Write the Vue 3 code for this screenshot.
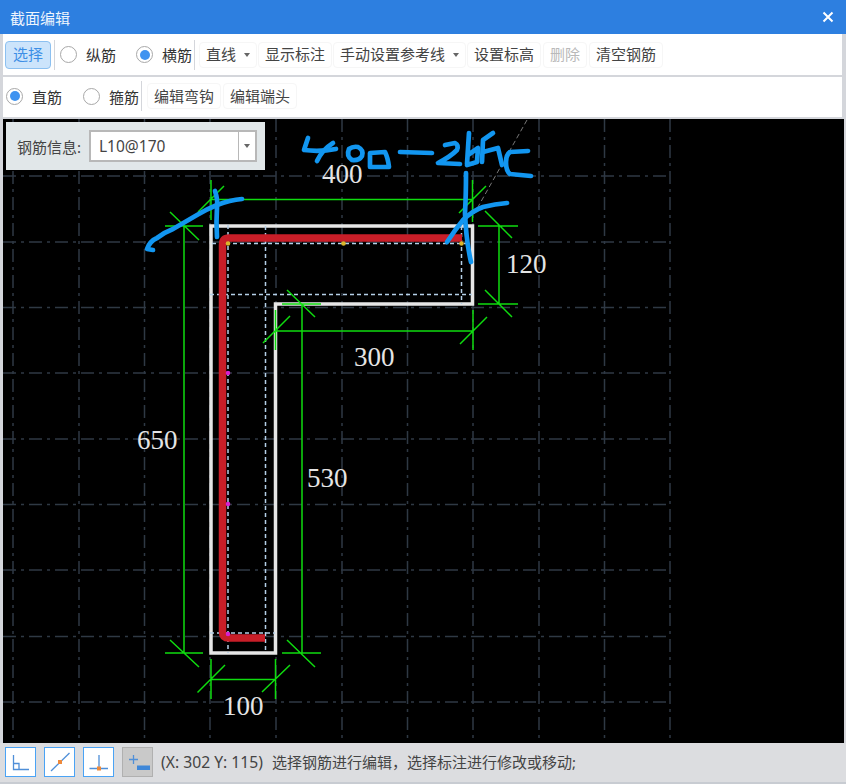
<template>
  <div class="window">
    <div class="title-bar">
      <span>截面编辑</span>
      <svg class="close" width="12" height="12" viewBox="0 0 12 12"><path d="M1.5 1.5 10.5 10.5M10.5 1.5 1.5 10.5" /></svg>
    </div>

    <div class="toolbar first">
      <button class="btn select">选择</button>
      <i class="sep"></i>
      <label class="radio" @click="barType = 'long'">
        <span class="dot" :class="{ on: barType === 'long' }"></span>纵筋
      </label>
      <label class="radio" @click="barType = 'cross'">
        <span class="dot" :class="{ on: barType === 'cross' }"></span>横筋
      </label>
      <i class="sep after-radio"></i>
      <button class="btn">直线<span class="caret"></span></button>
      <button class="btn">显示标注</button>
      <button class="btn">手动设置参考线<span class="caret"></span></button>
      <button class="btn">设置标高</button>
      <button class="btn off">删除</button>
      <button class="btn">清空钢筋</button>
    </div>

    <div class="toolbar second">
      <label class="radio" @click="shape = 'straight'">
        <span class="dot" :class="{ on: shape === 'straight' }"></span>直筋
      </label>
      <label class="radio" @click="shape = 'hoop'">
        <span class="dot" :class="{ on: shape === 'hoop' }"></span>箍筋
      </label>
      <i class="sep after-radio"></i>
      <button class="btn">编辑弯钩</button>
      <button class="btn">编辑端头</button>
    </div>

    <div class="canvas">
      <svg class="drawing" width="841" height="624" viewBox="3 119 841 624">
        <g class="grid">
          <line v-for="x in gridX" :key="'x' + x" :x1="x" y1="119" :x2="x" y2="743" />
          <line v-for="y in gridY" :key="'y' + y" x1="3" :y1="y" x2="670" :y2="y" />
        </g>
        <line class="guide" x1="527" y1="120" x2="474" y2="214" />

        <path class="outline" d="M211 226H472.5V304H275.5V653H211Z" />
        <path class="refs" d="M228 225V653M265.5 226V653M461.5 226V304M212 243.5H466M210 294.5H472M210 633H275" />
        <path class="bar" d="M462 238H229Q222.5 238 222.5 245V632Q222.5 638 229 638H265" />

        <circle v-for="p in yellowDots" :key="p" class="yellow" :cx="p" cy="243.5" r="2.3" />
        <circle v-for="p in pinkDots" :key="p" class="pink" cx="228" :cy="p" r="2.3" />

        <path class="dim" d="M211 199.5H472.5M211 180V220M472.5 180V222M198 212 224 186M459 213 486 186" />
        <path class="dim" d="M499 226V304M478 226H518M478 304H518M485 211 512 238M485 290 512 317" />
        <path class="dim" d="M275.5 331H473M473 310V350M275.5 310V350M460 344 487 317M263 343 290 316" />
        <path class="dim" d="M184 226V653M165 226H203M165 653H203M170 212 199 240M170 640 199 667" />
        <path class="dim" d="M302 304V653M282 304H321M282 653H321M287 290 315 317M287 640 315 667" />
        <path class="dim" d="M211 679.5H275.5M211 659V699M275.5 659V699M197.5 692.5 225 665M262 692 290 665" />

        <text v-for="t in labels" :key="t.text" class="num" :x="t.x" :y="t.y">{{ t.text }}</text>

        <g class="ink">
          <path d="M153 250 147 249Q150 241 157 238 165 232 173 229L197 215Q207 209 217 205 230 200 242 199" />
          <path d="M215 191Q218 200 217 207 216 222 217 237" />
          <path d="M466 173Q466 195 465 213 466 240 471 262" />
          <path d="M447 242Q455 230 463 220 472 211 483 207 495 204 507 203" />
          <path d="M308 138 304 150Q320 152 336 149" />
          <path d="M333 143Q322 150 317 161" />
          <path d="M349 149Q353 146 358 147 364 150 362 156 359 161 352 160 346 156 349 149Z" />
          <path d="M370 167V153L385 152Q388 158 389 167Z" />
          <path d="M400 152 432 153" />
          <path d="M445 145 455 143Q459 145 457 150 450 157 438 163L460 164" />
          <path d="M469 133 467 164M468 155 478 148 477 162 467 165" />
          <path d="M493 133 483 140 482 162M483 152 498 148 502 165" />
          <path d="M528 151 510 152Q506 155 506 162 506 171 510 174L531 176" />
        </g>
      </svg>

      <div class="info-panel">
        <span>钢筋信息:</span>
        <div class="combo">
          <span class="combo-text">L10@170</span>
          <span class="combo-arrow"><span class="caret"></span></span>
        </div>
      </div>
    </div>

    <div class="status-bar">
      <button class="snap">
        <svg width="28" height="28" viewBox="0 0 28 28"><path class="snap-line" d="M6.5 7V21.5H22M6.5 15.5H12V21.5" /></svg>
      </button>
      <button class="snap">
        <svg width="28" height="28" viewBox="0 0 28 28"><path class="snap-line" d="M5 23 23.5 5" /><rect class="snap-pt" x="12" y="12" width="4" height="4" /></svg>
      </button>
      <button class="snap">
        <svg width="28" height="28" viewBox="0 0 28 28"><path class="snap-line" d="M14 7V20.5M4.5 20.5H23" /><rect class="snap-pt" x="12" y="18.5" width="4" height="4" /></svg>
      </button>
      <button class="snap pressed">
        <svg width="28" height="28" viewBox="0 0 28 28"><path class="snap-line" d="M9.5 7V16M5 11.5H14" /><rect class="snap-bar" x="13" y="17.5" width="13" height="4.5" /></svg>
      </button>
      <span class="coords">(X: 302 Y: 115)</span>
      <span class="hint">选择钢筋进行编辑&#65292;选择标注进行修改或移动;</span>
    </div>
  </div>
</template>

<script setup>
import { ref } from 'vue'

const barType = ref('cross')
const shape = ref('straight')

const gridX = [13, 79, 144.5, 210, 276, 342, 407.5, 473, 539, 604.5, 670]
const gridY = [176, 242, 307.5, 373, 439, 504.5, 570, 636.5, 702]
const yellowDots = [228, 343.5, 461.5]
const pinkDots = [373, 504, 634]
const labels = [
  { text: '400', x: 322, y: 183 },
  { text: '120', x: 506, y: 273 },
  { text: '300', x: 354, y: 366 },
  { text: '650', x: 137, y: 449 },
  { text: '530', x: 307, y: 487 },
  { text: '100', x: 223, y: 715 }
]
</script>

<style>
html, body { margin: 0; background: #d6d8dc; }
</style>

<style scoped>
.window {
  width: 846px;
  height: 784px;
  display: flex;
  flex-direction: column;
  background: #d4d6db;
  font-family: "Noto Sans", "Noto Sans CJK SC", sans-serif;
  font-size: 15px;
  color: #444;
  overflow: hidden;
}
.title-bar {
  height: 34px;
  flex: none;
  display: flex;
  align-items: center;
  justify-content: space-between;
  padding: 0 12px 0 10px;
  background: #2d7fe0;
  color: #eef5fd;
}
.close path { stroke: #fff; stroke-width: 2; fill: none; }
.toolbar {
  flex: none;
  display: flex;
  align-items: center;
  margin: 0 4px 0 3px;
  background: #fff;
  white-space: nowrap;
}
.toolbar.first { height: 41px; padding-left: 2px; margin-bottom: 2px; }
.toolbar.second { height: 40px; padding: 0 0 2px 3px; box-sizing: border-box; margin-bottom: 2px; }
.btn {
  height: 26px;
  padding: 0 6px;
  margin-right: 1px;
  border: 1px solid #f6f6f6;
  border-radius: 4px;
  background: #fff;
  color: #444;
  font: inherit;
  display: flex;
  align-items: center;
  line-height: 1;
}
.second .btn { margin-right: 2px; }
.btn.select {
  height: 28px;
  width: 46px;
  justify-content: center;
  margin-right: 3px;
  background: #cce4fb;
  border-color: #8cc0f0;
  color: #3d8fe6;
}
.btn.off { color: #b9b9b9; margin-left: 1px; margin-right: 2px; }
.sep {
  width: 1px;
  height: 30px;
  background: #d4d6db;
  flex: none;
  margin-right: 5px;
}
.sep.after-radio { margin-left: 2px; margin-right: 4px; }
.second .sep.after-radio { margin-left: 2px; margin-right: 5px; }
.radio {
  display: flex;
  align-items: center;
  margin-right: 20px;
  color: #333;
  cursor: pointer;
}
.second .radio { margin-right: 21px; }
.radio:has(+ .sep), .second .radio:has(+ .sep) { margin-right: 0; }
.dot {
  width: 17px;
  height: 17px;
  box-sizing: border-box;
  margin-right: 9px;
  border: 1.5px solid #a8a8a8;
  border-radius: 50%;
  background: #fff;
  position: relative;
}
.dot.on::after {
  content: "";
  position: absolute;
  inset: 2.5px;
  border-radius: 50%;
  background: #3f93f0;
}
.caret {
  display: inline-block;
  width: 0;
  height: 0;
  margin-left: 8px;
  border-left: 3.5px solid transparent;
  border-right: 3.5px solid transparent;
  border-top: 4px solid #666;
}
.canvas {
  position: relative;
  flex: none;
  width: 841px;
  height: 624px;
  margin-left: 3px;
  background: #000;
}
.drawing { display: block; }
.grid line {
  stroke: #2f3944;
  stroke-width: 1.5;
  stroke-dasharray: 13 5 3 5;
}
.guide { stroke: #777; stroke-width: 1; stroke-dasharray: 5 3; }
.outline { fill: none; stroke: #e6e6e6; stroke-width: 3.5; }
.refs { fill: none; stroke: #b5d0e8; stroke-width: 1.5; stroke-dasharray: 4 3; }
.bar { fill: none; stroke: #c81e28; stroke-width: 7.5; }
.yellow { fill: #d9b52a; }
.pink { fill: #d81fd0; }
.dim { fill: none; stroke: #0fdc0f; stroke-width: 1.5; }
.num {
  font-family: "Liberation Serif", serif;
  font-size: 27px;
  fill: #e4e4e4;
}
.ink path {
  fill: none;
  stroke: #1296f0;
  stroke-width: 4.7;
  stroke-linecap: round;
  stroke-linejoin: round;
}
.info-panel {
  position: absolute;
  left: 3px;
  top: 3px;
  width: 259px;
  height: 48px;
  box-sizing: border-box;
  padding: 0 8px 0 11px;
  display: flex;
  align-items: center;
  justify-content: space-between;
  background: #e1e7e9;
  font-size: 15px;
}
.combo {
  width: 168px;
  height: 32px;
  box-sizing: border-box;
  display: flex;
  border: 2px solid #b8b8b8;
  background: #fff;
}
.combo-text {
  flex: 1;
  padding-left: 8px;
  line-height: 28px;
  font-size: 15.5px;
  color: #444;
}
.combo-arrow {
  width: 16px;
  display: flex;
  align-items: center;
  justify-content: center;
  border-left: 1px solid #b8b8b8;
}
.combo-arrow .caret { margin-left: 0; }
.status-bar {
  flex: 1;
  display: flex;
  align-items: center;
  padding: 0 0 2px 5px;
  background: #dcdde0;
  border-bottom: 2px solid #c8ccd2;
  white-space: nowrap;
}
.snap {
  width: 31px;
  height: 30px;
  padding: 0;
  margin-right: 8px;
  box-sizing: border-box;
  display: flex;
  align-items: center;
  justify-content: center;
  border: 1.5px solid #4aa3f5;
  background: #fff;
}
.snap.pressed {
  background: #c9c9c9;
  border-color: #b0b0b0;
}
.snap-line { fill: none; stroke: #4f8fd8; stroke-width: 1.3; }
.snap-pt { fill: #ee8a3c; }
.snap-bar { fill: #3f87d8; }
.coords { margin-right: 9px; font-size: 15.7px; }
.hint { font-size: 15px; }
</style>
